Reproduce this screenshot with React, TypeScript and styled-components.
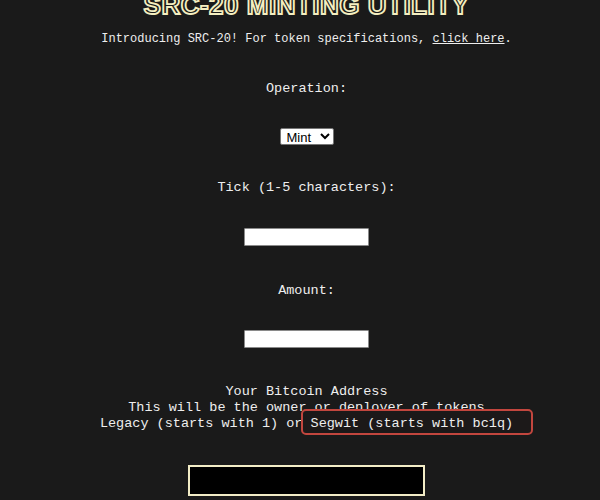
import React, { useState } from 'react';
import styled, { createGlobalStyle } from 'styled-components';

const GlobalStyle = createGlobalStyle`
	html, body {
		margin: 0;
		padding: 0;
		background: #1a1a1a;
		color: #eeeeee;
		font-family: 'Liberation Mono', 'Courier New', monospace;
		overflow: hidden;
	}
`;

const App = (): React.FunctionComponentElement<JSX.Element> => {
	const [operation, setOperation] = useState('mint');
	const [tick, setTick] = useState('');
	const [amount, setAmount] = useState('');
	const [address, setAddress] = useState('');

	return (
		<Page>
			<GlobalStyle />
			<Title>SRC-20 MINTING UTILITY</Title>
			<Intro>
				Introducing SRC-20! For token specifications, <a href='#'>click here</a>.
			</Intro>
			<Form>
				<Label>Operation:</Label>
				<Select $top={-2} value={operation} onChange={e => setOperation(e.target.value)}>
					<option value='mint'>Mint</option>
					<option value='deploy'>Deploy</option>
					<option value='transfer'>Transfer</option>
				</Select>
				<Label $top={2}>Tick (1-5 characters):</Label>
				<TextInput $top={-1} maxLength={5} value={tick} onChange={e => setTick(e.target.value)} />
				<Label $top={4}>Amount:</Label>
				<TextInput $top={-2} value={amount} onChange={e => setAmount(e.target.value)} />
				<Label $top={3}>
					Your Bitcoin Address
					<br />
					This will be the owner or deployer of tokens
					<br />
					Legacy (starts with 1) or <Mark>Segwit (starts with bc1q)</Mark>
				</Label>
				<WalletInput $top={0} value={address} onChange={e => setAddress(e.target.value)} />
			</Form>
		</Page>
	);
};

const Page = styled.main`
	padding-left: 13px;
	text-align: center;
`;

const Title = styled.h1`
	margin: -8px 0 0;
	font-family: 'Liberation Sans', Arial, sans-serif;
	font-weight: 900;
	font-size: 26px;
	line-height: 26px;
	letter-spacing: 0.5px;
	color: #1a1a1a;
	-webkit-text-stroke: 1.8px #f4eec0;
`;

const Intro = styled.p`
	margin: 13px 0 0;
	font-size: 12px;
	line-height: 16px;

	a {
		color: inherit;
	}
`;

const Form = styled.div`
	margin-top: 34px;
	display: flex;
	flex-direction: column;
	align-items: center;
	gap: 33px;
`;

const Label = styled.label<{ $top?: number }>`
	margin-top: ${p => p.$top || 0}px;
	font-size: 13.5px;
	line-height: 16px;
`;

const Select = styled.select<{ $top?: number }>`
	margin-top: ${p => p.$top || 0}px;
	width: 54px;
	height: 17px;
	padding: 0 2px;
	font-family: 'Liberation Sans', Arial, sans-serif;
	font-size: 13px;
	color: #000;
	background: #fff;
	border: 1px solid #767676;
	border-radius: 2px;
`;

const TextInput = styled.input<{ $top?: number }>`
	margin-top: ${p => p.$top || 0}px;
	box-sizing: border-box;
	width: 125px;
	height: 18px;
	background: #fff;
	border: 1px solid #8a8a8a;
	border-radius: 1px;
`;

const Mark = styled.span`
	position: relative;
	z-index: 1;

	&::before {
		content: '';
		position: absolute;
		left: -10px;
		right: -20px;
		top: -7px;
		bottom: -4px;
		z-index: -1;
		background: #1c1919;
		border: 2px solid #c2463e;
		border-radius: 5px;
	}
`;

const WalletInput = styled.input<{ $top?: number }>`
	margin-top: ${p => p.$top || 0}px;
	box-sizing: border-box;
	width: 237px;
	height: 31px;
	background: #000;
	border: 2px solid #f2ecc6;
	color: #fff;
`;

export default App;
